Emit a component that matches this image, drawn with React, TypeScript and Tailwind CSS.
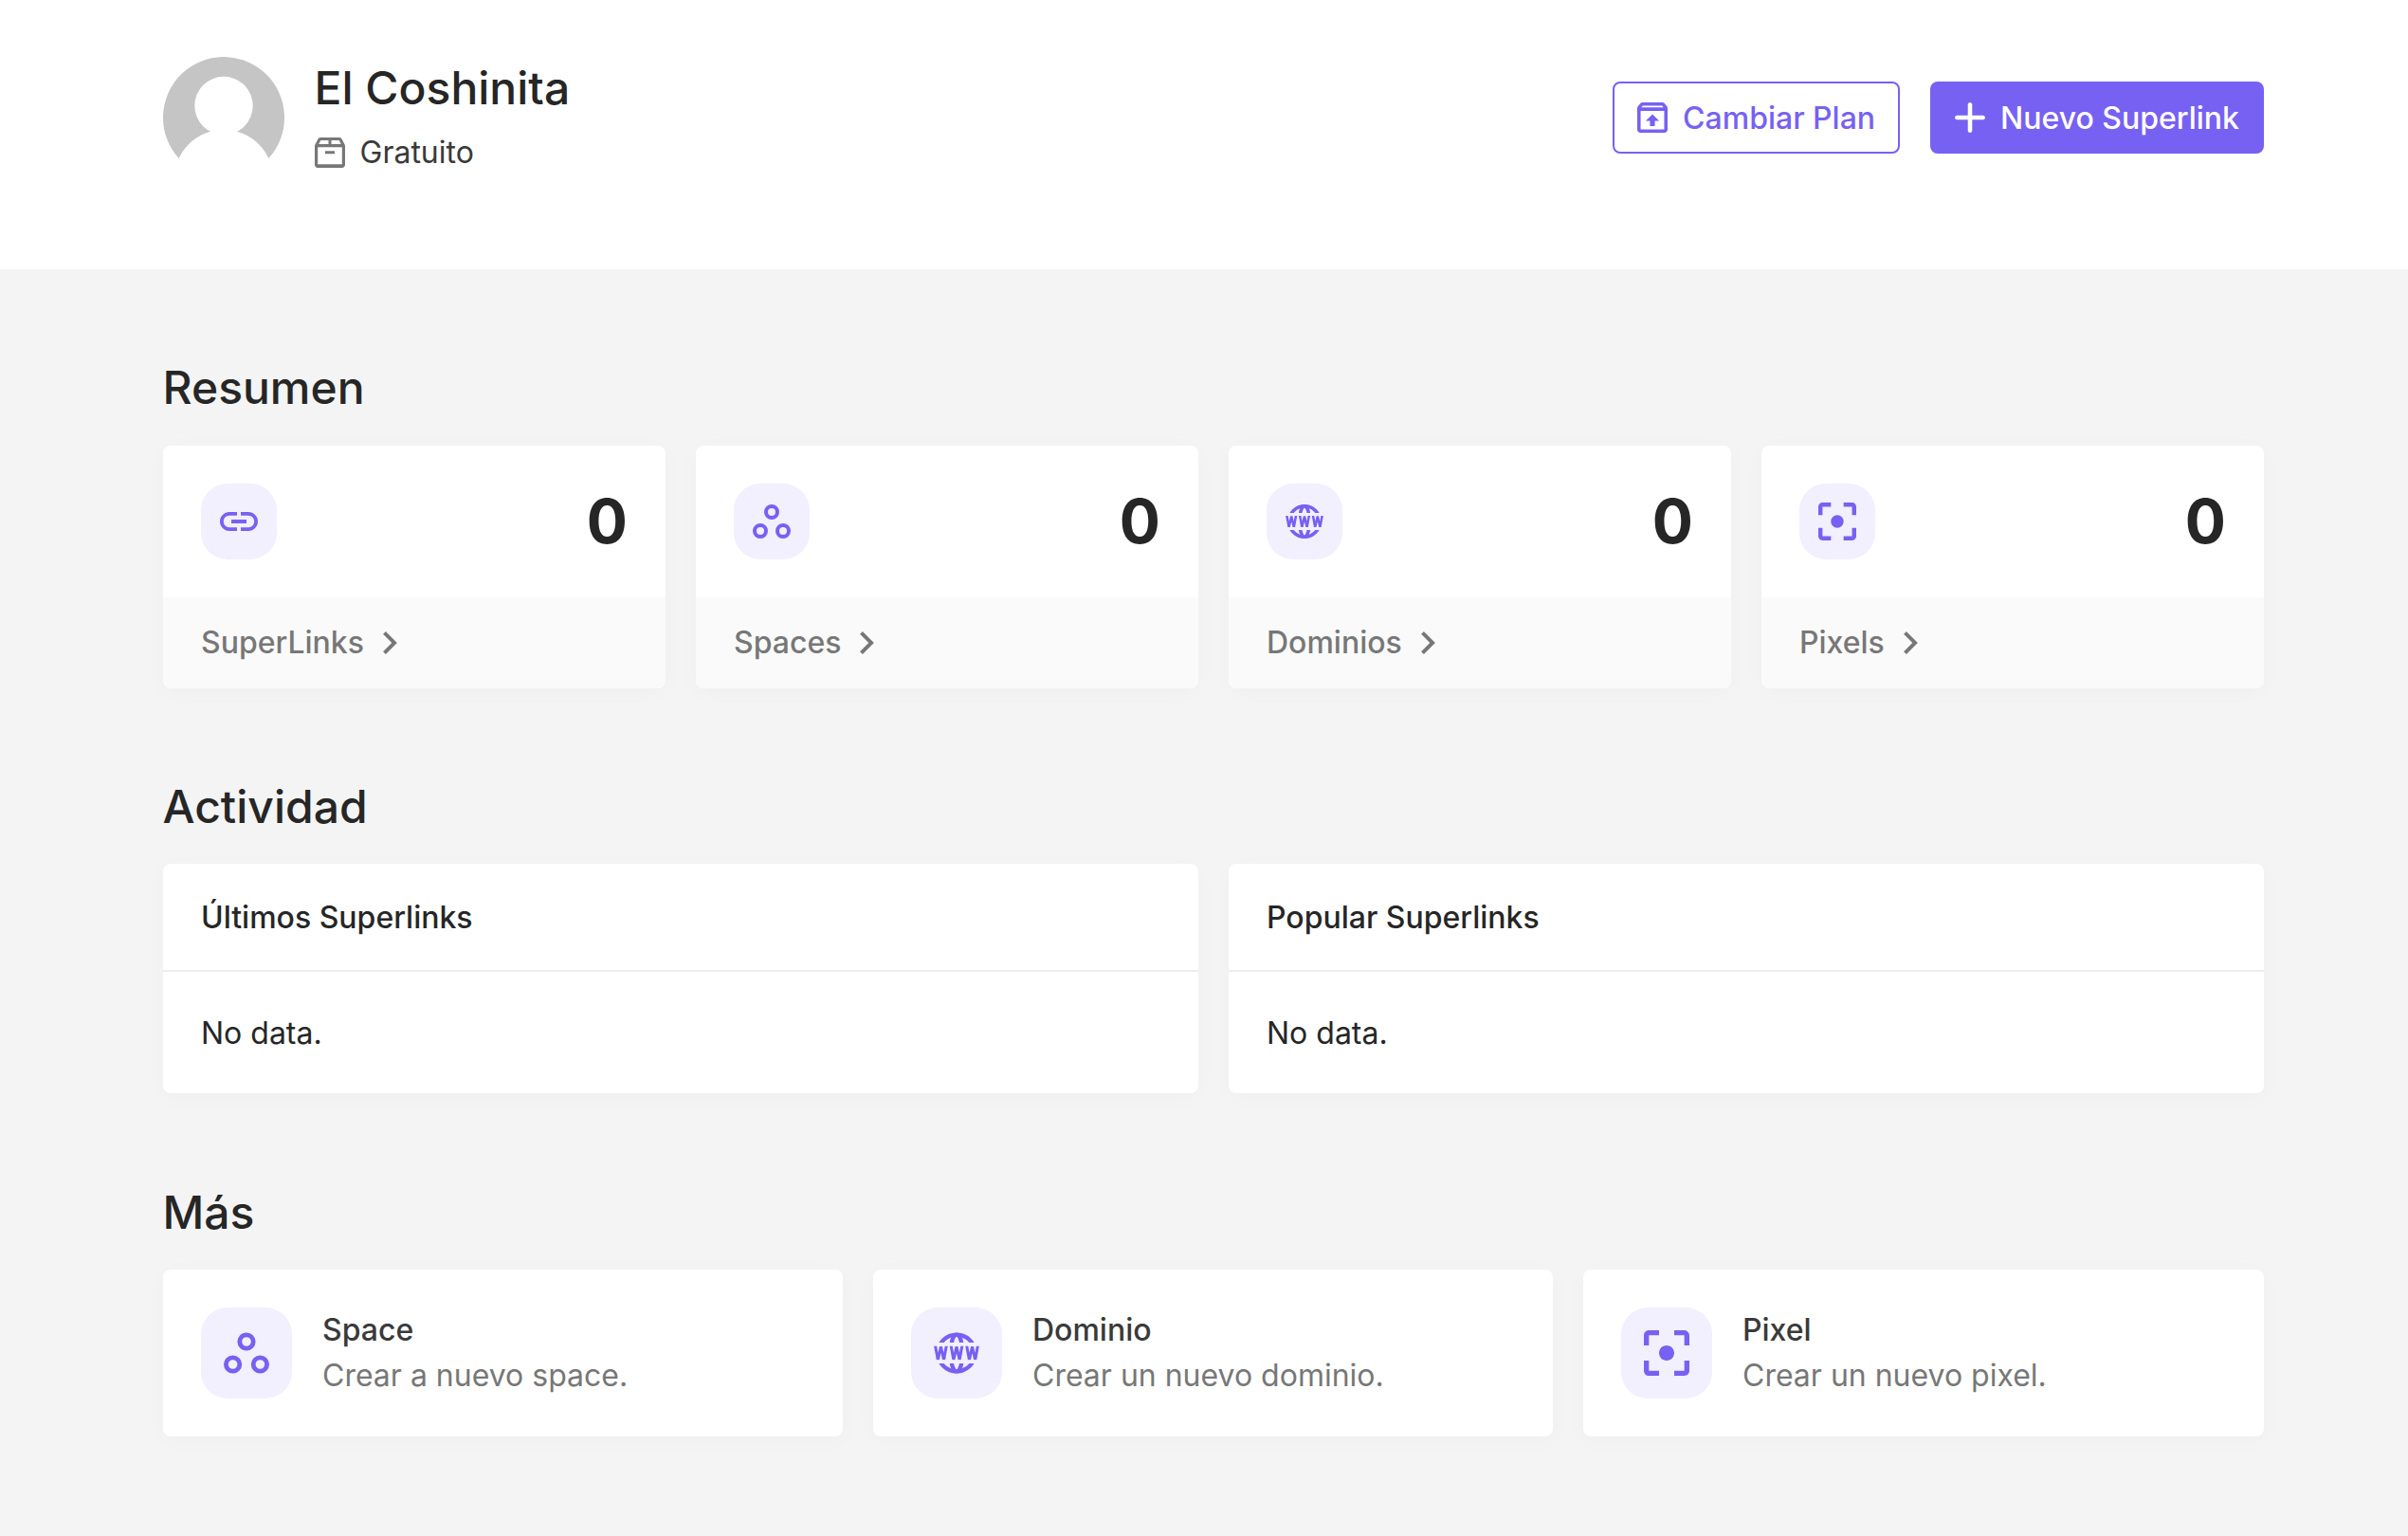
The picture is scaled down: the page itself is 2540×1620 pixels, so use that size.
import { useId, type ReactNode } from 'react';

type IconProps = { className?: string };

const LinkIcon = ({ className }: IconProps) => (
  <svg className={className} viewBox="2 2 20 20" fill="currentColor">
    <path d="M3.9 12c0-1.71 1.39-3.1 3.1-3.1h4V7H7c-2.76 0-5 2.24-5 5s2.24 5 5 5h4v-1.9H7c-1.71 0-3.1-1.39-3.1-3.1zM8 13h8v-2H8v2zm9-6h-4v1.9h4c1.71 0 3.1 1.39 3.1 3.1s-1.39 3.1-3.1 3.1h-4V17h4c2.76 0 5-2.24 5-5s-2.24-5-5-5z" />
  </svg>
);

const SpacesIcon = ({ className }: IconProps) => (
  <svg className={className} viewBox="0 0 20 20" fill="none" stroke="currentColor" strokeWidth="2">
    <circle cx="10" cy="5" r="3" />
    <circle cx="4" cy="15" r="3" />
    <circle cx="16" cy="15" r="3" />
  </svg>
);

/* Globe split in two halves with the three zigzags between them. */
const WwwIcon = ({ className }: IconProps) => {
  const clip = useId();
  return (
    <svg className={className} viewBox="0 0 40 40" fill="none" stroke="currentColor">
      <clipPath id={`${clip}-globe`}>
        <rect x="0" y="0" width="40" height="10.9" />
        <rect x="0" y="29.1" width="40" height="10.9" />
      </clipPath>
      <clipPath id={`${clip}-band`}>
        <rect x="0" y="14" width="40" height="12" />
      </clipPath>
      <g clipPath={`url(#${clip}-globe)`} strokeWidth="3.6">
        <circle cx="20" cy="20" r="16.2" />
        <ellipse cx="20" cy="20" rx="5.3" ry="16.2" />
      </g>
      <g clipPath={`url(#${clip}-band)`} strokeWidth="2.5" strokeLinejoin="bevel">
        <path d="M1.2 13l2.4 13L6.2 14.500 8.800 26l2.400-13" />
        <path d="M15 13l2.400 13L20 14.500 22.600 26 25 13" />
        <path d="M28.800 13l2.400 13 2.600-11.500L36.400 26l2.400-13" />
      </g>
    </svg>
  );
};

const PixelIcon = ({ className }: IconProps) => (
  <svg className={className} viewBox="3 3 18 18" fill="currentColor">
    <path d="M5 15H3v4c0 1.100.9 2 2 2h4v-2H5v-4zM5 5h4V3H5c-1.100 0-2 .9-2 2v4h2V5zm14-2h-4v2h4v4h2V5c0-1.100-.9-2-2-2zm0 16h-4v2h4c1.100 0 2-.9 2-2v-4h-2v4zM12 9c-1.660 0-3 1.340-3 3s1.340 3 3 3 3-1.340 3-3-1.340-3-3-3z" />
  </svg>
);

const PlanIcon = ({ className }: IconProps) => (
  <svg className={className} viewBox="3 3 18 18" fill="currentColor">
    <path d="M20.55 5.22l-1.39-1.68C18.88 3.21 18.47 3 18 3H6c-.47 0-.88.21-1.15.55L3.46 5.22C3.17 5.57 3 6.01 3 6.5V19c0 1.1.89 2 2 2h14c1.1 0 2-.9 2-2V6.500c0-.49-.17-.93-.45-1.280zM6.240 5h11.520l.83 1H5.420l.82-1zM5 19V8h14v11H5zm3-5h2.550v3h2.900v-3H16l-4-4z" />
  </svg>
);

const PlusIcon = ({ className }: IconProps) => (
  <svg className={className} viewBox="5 5 14 14" fill="currentColor">
    <path d="M18 13h-5v5c0 .55-.45 1-1 1s-1-.45-1-1v-5H6c-.55 0-1-.45-1-1s.45-1 1-1h5V6c0-.55.45-1 1-1s1 .45 1 1v5h5c.55 0 1 .45 1 1s-.45 1-1 1z" />
  </svg>
);

const PackageIcon = ({ className }: IconProps) => (
  <svg className={className} viewBox="0 0 32 32" fill="currentColor">
    <path
      fillRule="evenodd"
      d="M6.200 0h19.600c1.300 0 2.400.7 2.900 1.900L31.500 7.200c.3.600.5 1.300.5 2V28.800c0 1.800-1.400 3.200-3.200 3.200H3.200C1.400 32 0 30.600 0 28.800V9.200c0-.7.200-1.400.5-2L3.300 1.900C3.800.7 4.900 0 6.200 0zM6.300 3 4.200 7.100h10.300V3zM17.500 3v4.100h10.300L25.700 3zM3.200 10.300v17.900h25.600V10.300zM11 14.200h10v3.100H11z"
    />
  </svg>
);

const ChevronIcon = ({ className }: IconProps) => (
  <svg className={className} viewBox="8.590 6 7.410 12" fill="currentColor">
    <path d="M8.590 16.590 13.170 12 8.590 7.410 10 6l6 6-6 6z" />
  </svg>
);

const Avatar = () => (
  <svg className="size-32" viewBox="0 0 128 128">
    <path d="M16.700 107.100A64 64 0 1 1 111.300 107.100z" fill="#c5c5c5" />
    <circle cx="64" cy="51.500" r="30.700" fill="#fff" />
    <circle cx="64" cy="128.800" r="52.100" fill="#fff" />
  </svg>
);

const card = 'overflow-hidden rounded-lg bg-white shadow-[0_4px_24px_rgba(0,0,0,0.024)]';

const Heading = ({ children }: { children: ReactNode }) => (
  <h2 className="-ml-[0.5px] text-[48px] leading-[58px] font-medium">{children}</h2>
);

const stats = [
  { label: 'SuperLinks', value: 0, Icon: LinkIcon },
  { label: 'Spaces', value: 0, Icon: SpacesIcon },
  { label: 'Dominios', value: 0, Icon: WwwIcon },
  { label: 'Pixels', value: 0, Icon: PixelIcon },
];

const activity = ['Últimos Superlinks', 'Popular Superlinks'];

const more = [
  { title: 'Space', text: 'Crear a nuevo space.', Icon: SpacesIcon },
  { title: 'Dominio', text: 'Crear un nuevo dominio.', Icon: WwwIcon },
  { title: 'Pixel', text: 'Crear un nuevo pixel.', Icon: PixelIcon },
];

export default function App() {
  return (
    <div className="min-h-[1620px] bg-[#f4f4f4] font-['Inter',sans-serif] text-[32px] leading-[48px] text-[#262626] antialiased [font-optical-sizing:none]">
      <header className="flex h-[284px] items-start justify-between bg-white pt-[60px] pr-[152px] pl-[172px]">
        <div className="flex gap-8">
          <Avatar />
          <div className="pt-1">
            <h1 className="-ml-[0.5px] text-[48px] leading-[58px] font-medium">El Coshinita</h1>
            <div className="mt-[15px] flex items-center gap-[15.5px] text-[#3a3a3a]">
              <PackageIcon className="size-8 text-[#777]" />
              <span>Gratuito</span>
            </div>
          </div>
        </div>
        <div className="flex gap-8 pt-[26px] font-medium">
          <button className="flex h-[76px] items-center gap-4 rounded-lg border-2 border-[#7761f2] px-6 text-[#7761f2]">
            <PlanIcon className="size-8" />
            <span className="pt-0.5">Cambiar Plan</span>
          </button>
          <button className="flex h-[76px] items-center gap-4 rounded-lg border-2 border-[#7761f2] bg-[#7761f2] px-6 text-white">
            <PlusIcon className="size-8" />
            <span className="pt-0.5">Nuevo Superlink</span>
          </button>
        </div>
      </header>

      <main className="pt-[96px] pr-[152px] pl-[172px]">
        <section>
          <Heading>Resumen</Heading>
          <div className="mt-8 grid grid-cols-4 gap-8">
            {stats.map(({ label, value, Icon }) => (
              <div key={label} className={card}>
                <div className="flex h-40 items-center justify-between px-10">
                  <div className="flex size-20 items-center justify-center rounded-[28px] bg-[#f2effe] text-[#7761f2]">
                    <Icon className="size-10" />
                  </div>
                  <span className="text-[64px] leading-[76px] font-bold">{value}</span>
                </div>
                <div className="flex h-24 items-center bg-[#fafafa] px-10 font-medium text-[#777]">
                  {label}
                  <ChevronIcon className="ml-5 h-6 w-[15px]" />
                </div>
              </div>
            ))}
          </div>
        </section>

        <section className="mt-[96px]">
          <Heading>Actividad</Heading>
          <div className="mt-[31px] grid grid-cols-2 gap-8">
            {activity.map((title) => (
              <div key={title} className={card}>
                <div className="border-b-2 border-[#ededed] px-10 pt-[33px] pb-[31px] font-medium">{title}</div>
                <div className="px-10 pt-[41px] pb-[39px]">No data.</div>
              </div>
            ))}
          </div>
        </section>

        <section className="mt-[97px]">
          <Heading>Más</Heading>
          <div className="mt-[31px] grid grid-cols-[717px_717px_718px] gap-8">
            {more.map(({ title, text, Icon }) => (
              <div key={title} className={card}>
                <div className="flex gap-8 p-10">
                  <div className="flex size-24 items-center justify-center rounded-[28px] bg-[#f2effe] text-[#7761f2]">
                    <Icon className="size-12" />
                  </div>
                  <div>
                    <div className="font-medium text-[#3a3a3a]">{title}</div>
                    <div className="text-[#777]">{text}</div>
                  </div>
                </div>
              </div>
            ))}
          </div>
        </section>
      </main>
    </div>
  );
}
